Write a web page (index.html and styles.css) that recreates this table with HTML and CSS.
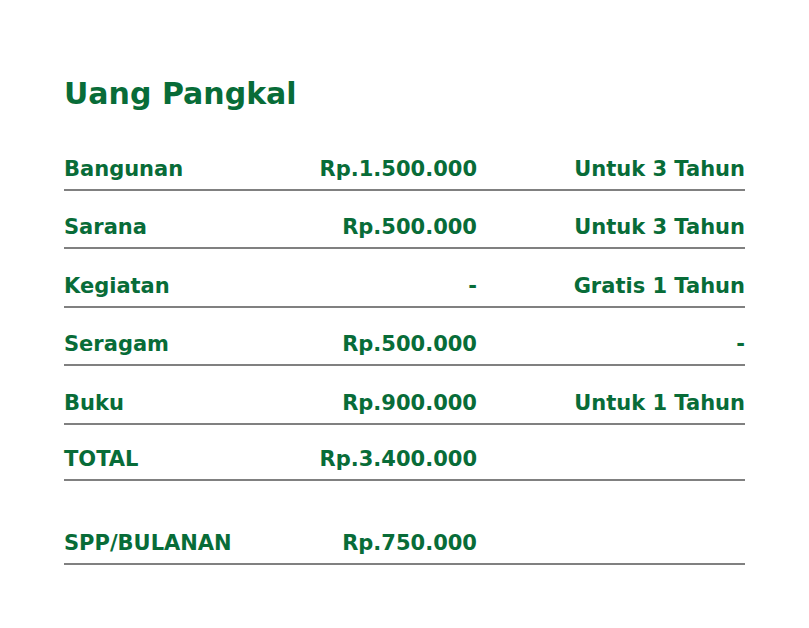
FILE: index.html
```html
<!DOCTYPE html>
<html>
<head>
<meta charset="utf-8">
<link rel="stylesheet" href="styles.css">
</head>
<body>
<div class="card">
  <h1 class="title">Uang Pangkal</h1>
  <div class="table">
    <div class="row"><span class="c1">Bangunan</span><span class="c2">Rp.1.500.000</span><span class="c3">Untuk 3 Tahun</span></div>
    <div class="row"><span class="c1">Sarana</span><span class="c2">Rp.500.000</span><span class="c3">Untuk 3 Tahun</span></div>
    <div class="row"><span class="c1">Kegiatan</span><span class="c2">-</span><span class="c3">Gratis 1 Tahun</span></div>
    <div class="row"><span class="c1">Seragam</span><span class="c2">Rp.500.000</span><span class="c3">-</span></div>
    <div class="row"><span class="c1">Buku</span><span class="c2">Rp.900.000</span><span class="c3">Untuk 1 Tahun</span></div>
    <div class="row total"><span class="c1">TOTAL</span><span class="c2">Rp.3.400.000</span><span class="c3"></span></div>
    <div class="row spp"><span class="c1">SPP/BULANAN</span><span class="c2">Rp.750.000</span><span class="c3"></span></div>
  </div>
</div>
</body>
</html>
```
FILE: styles.css
```css
html, body {
  margin: 0;
  padding: 0;
  background: #ffffff;
}
.card {
  width: 681px;
  padding: 76px 0 0 64px;
  font-family: "DejaVu Sans", sans-serif;
  color: #086c38;
}
.title {
  margin: 0;
  font-size: 30px;
  line-height: 36px;
  font-weight: 700;
}
.table {
  margin-top: 20px;
  display: flex;
  flex-direction: column;
}
.row {
  display: grid;
  grid-template-columns: 200px 213px 268px;
  align-items: end;
  height: 56.5px;
  padding-bottom: 0;
  border-bottom: 2px solid #808080;
  font-size: 21px;
  font-weight: 700;
  box-sizing: content-box;
}
.row span {
  line-height: 24px;
  padding-bottom: 8px;
}
.c2, .c3 {
  text-align: right;
}
.row.total {
  height: 54px;
}
.row.spp {
  height: 82px;
}
```
